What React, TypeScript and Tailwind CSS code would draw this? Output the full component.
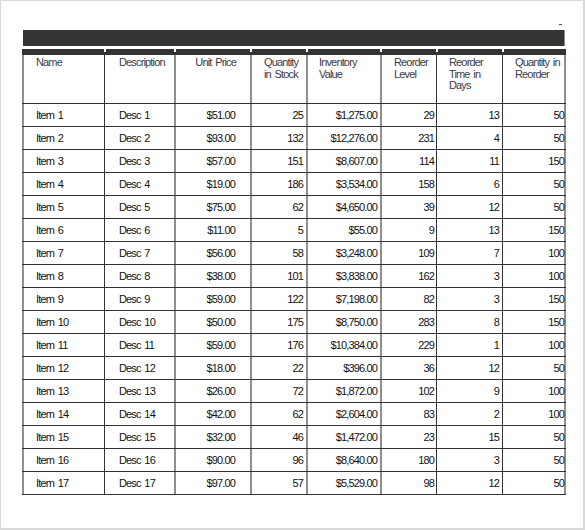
const cols = [
  { w: 'w-[82px]', b: 'border-l-2 border-[#8f8f8f]' },
  { w: 'w-[70px]', b: 'border-l border-[#333]' },
  { w: 'w-[76px]', b: 'border-l-2 border-[#8f8f8f]' },
  { w: 'w-[56px]', b: 'border-l-2 border-[#8f8f8f]' },
  { w: 'w-[74px]', b: 'border-l-2 border-[#8f8f8f]' },
  { w: 'w-[56px]', b: 'border-l-2 border-[#8f8f8f]' },
  { w: 'w-[66px]', b: 'border-l border-[#333]' },
  { w: 'w-[64px]', b: 'border-l border-[#333] border-r-2 border-r-[#8f8f8f]' },
];

const headers = [
  { t: 'Name', c: 'pl-3' },
  { t: 'Description', c: 'pl-[14px]' },
  { t: 'Unit Price', c: 'pr-[14px] text-right' },
  { t: 'Quantity in Stock', c: 'pl-3 pr-2' },
  { t: 'Inventory Value', c: 'pl-[11px] pr-3' },
  { t: 'Reorder Level', c: 'pl-3 pr-2' },
  { t: 'Reorder Time in Days', c: 'pl-3 pr-3' },
  { t: 'Quantity in Reorder', c: 'pl-3 pr-0' },
];

const dataPad = ['pl-3', 'pl-[14px]', 'pr-[15px] text-right', 'pr-[3px] text-right', 'pr-[3px] text-right', 'pr-[2px] text-right', 'pr-[3px] text-right', 'pr-0 text-right'];

const rows: [number, number, number, number, number, number][] = [
  [51, 25, 1275, 29, 13, 50],
  [93, 132, 12276, 231, 4, 50],
  [57, 151, 8607, 114, 11, 150],
  [19, 186, 3534, 158, 6, 50],
  [75, 62, 4650, 39, 12, 50],
  [11, 5, 55, 9, 13, 150],
  [56, 58, 3248, 109, 7, 100],
  [38, 101, 3838, 162, 3, 100],
  [59, 122, 7198, 82, 3, 150],
  [50, 175, 8750, 283, 8, 150],
  [59, 176, 10384, 229, 1, 100],
  [18, 22, 396, 36, 12, 50],
  [26, 72, 1872, 102, 9, 100],
  [42, 62, 2604, 83, 2, 100],
  [32, 46, 1472, 23, 15, 50],
  [90, 96, 8640, 180, 3, 50],
  [97, 57, 5529, 98, 12, 50],
];

const money = (n: number) => '$' + n.toLocaleString('en-US', { minimumFractionDigits: 2, maximumFractionDigits: 2 });

export default function App() {
  return (
    <div
      className="w-[585px] h-[530px] bg-white border-t border-l border-r-2 border-b-2 border-[#dadada] overflow-hidden tracking-[-0.85px] [word-spacing:1.5px]"
      style={{ fontFamily: '"Liberation Sans", Arial, sans-serif' }}
    >
      <div className="flex justify-end pt-[23px] pr-[21px] h-[29px]">
        <div className="w-[3px] h-px bg-[#555]" />
      </div>
      <div className="ml-[22px] w-[542px] h-4 bg-[#333] border-r border-[#888]" />
      <div className="ml-[21px] mt-[3px]">
        {/* header top band */}
        <div className="flex">
          {cols.map((c, i) => (
            <div key={i} className={`${c.w} h-[3px] bg-[#333] ${i > 0 ? 'border-l-2 border-white' : ''}`} />
          ))}
        </div>
        <div className="w-[544px] h-[3px] bg-[#333]" />
        {/* header row */}
        <div className="flex h-[49px] border-b border-[#333] w-[544px]">
          {cols.map((c, i) => (
            <div key={i} className={`${c.w} ${c.b} h-full pt-[2px] text-[11px] leading-[11.7px] text-[#3b3b48] ${headers[i].c}`}>
              {headers[i].t}
            </div>
          ))}
        </div>
        {rows.map((r, ri) => {
          const vals = [
            `Item ${ri + 1}`,
            `Desc ${ri + 1}`,
            money(r[0]),
            String(r[1]),
            money(r[2]),
            String(r[3]),
            String(r[4]),
            String(r[5]),
          ];
          return (
            <div key={ri} className="flex h-[23px] border-b border-[#333] w-[544px]">
              {cols.map((c, i) => (
                <div key={i} className={`${c.w} ${c.b} h-full flex items-center text-[11px] text-[#111] ${dataPad[i]} ${i >= 2 ? 'justify-end' : ''}`}>
                  {vals[i]}
                </div>
              ))}
            </div>
          );
        })}
      </div>
    </div>
  );
}
